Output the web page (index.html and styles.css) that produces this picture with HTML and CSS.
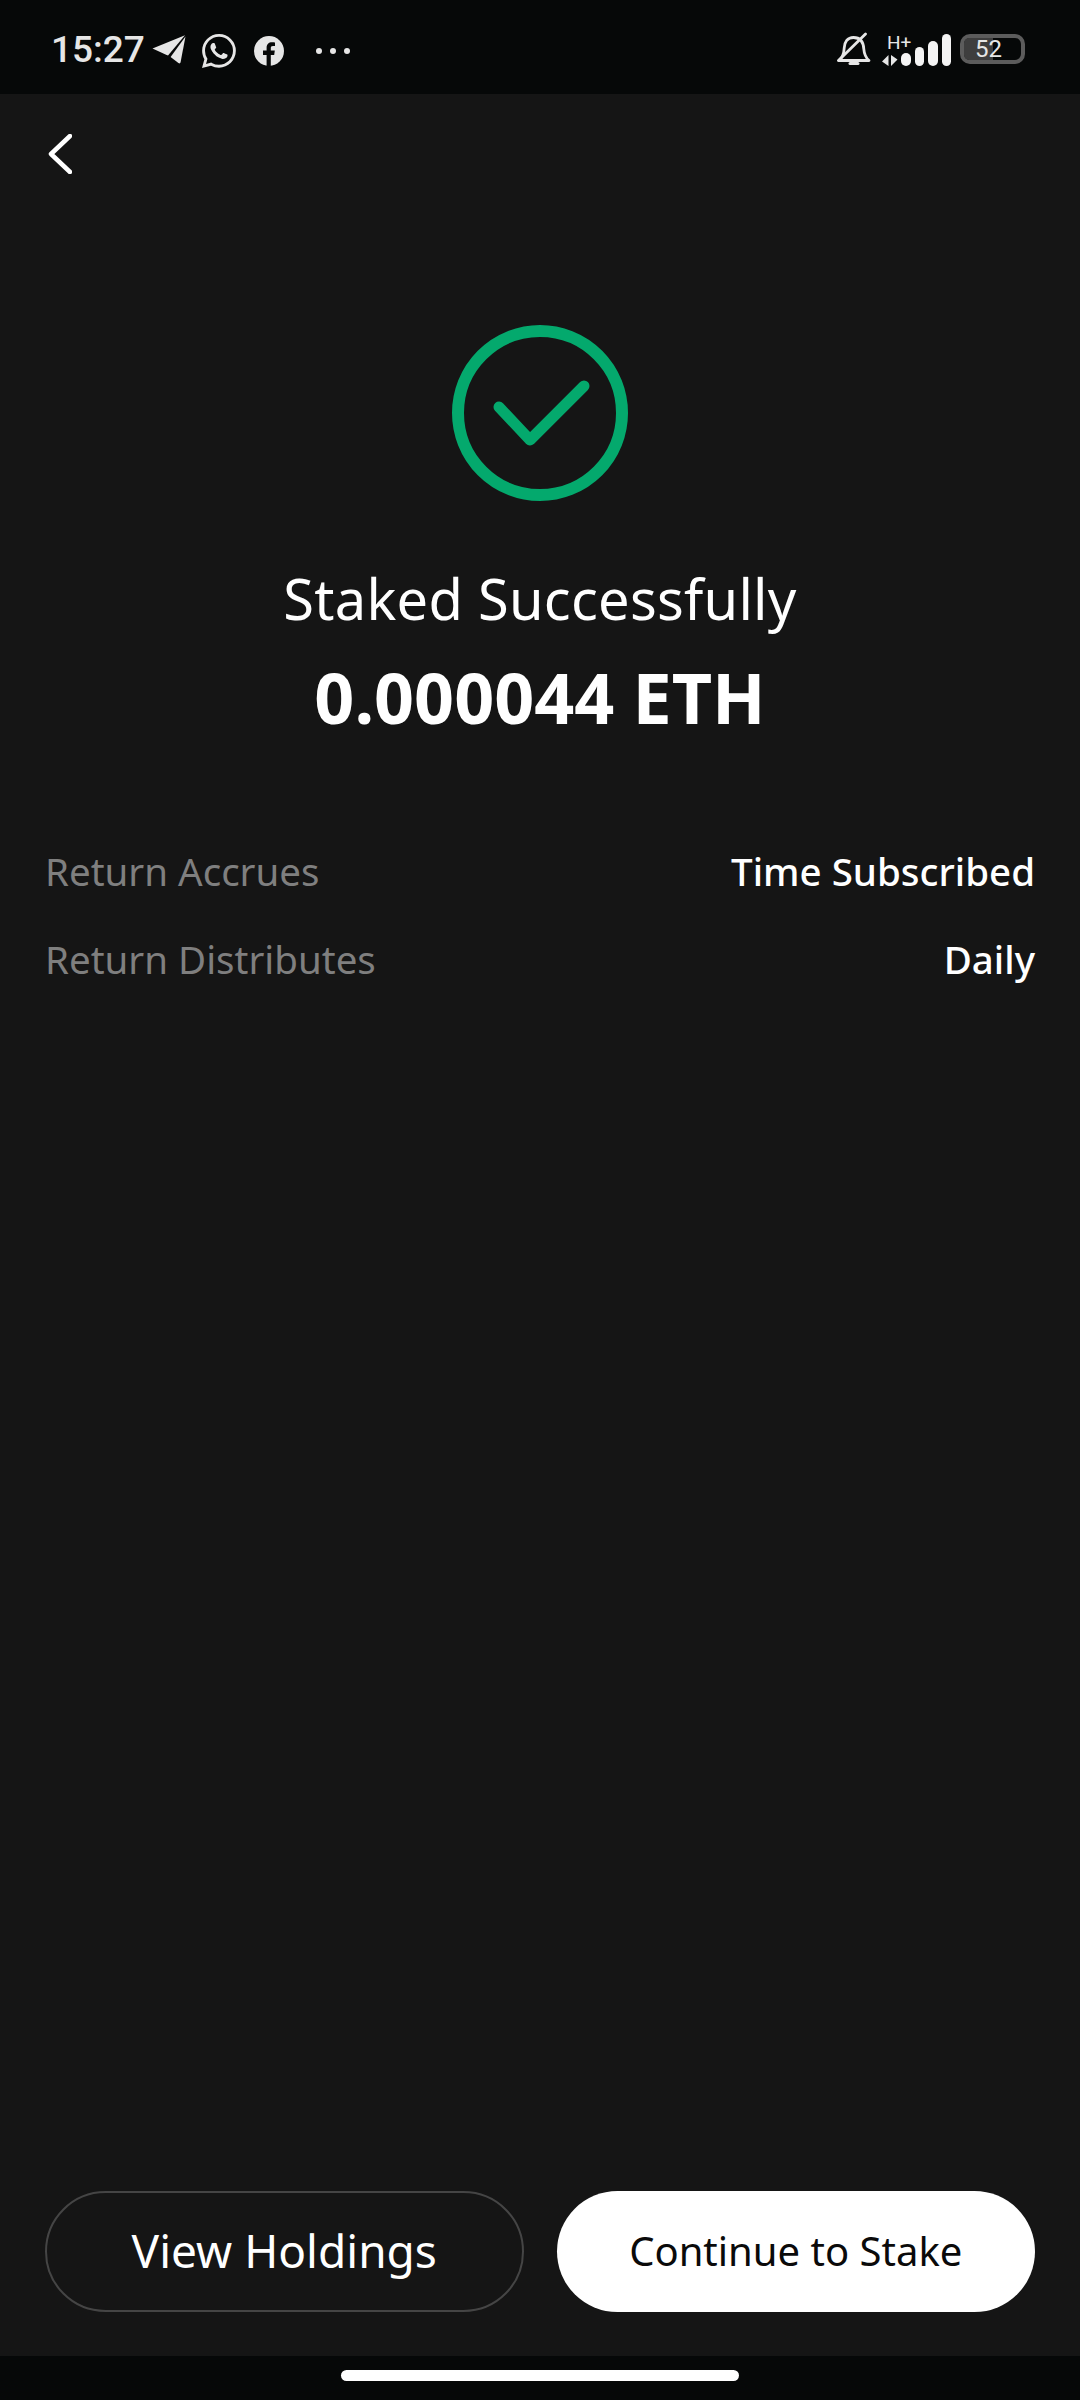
FILE: index.html
```html
<!DOCTYPE html>
<html lang="en">
<head>
    <meta charset="UTF-8">
    <meta name="viewport" content="width=device-width, initial-scale=1.0">
    <title>Staked Successfully</title>
    <link rel="stylesheet" href="styles.css">
</head>
<body>
    <div class="status-bar">
        <div class="status-left">
            <span class="clock">15:27</span>
            <svg class="ic-telegram" width="34" height="30" viewBox="0 0 34 30">
                <path fill="#e6e6e6" d="M0.5 13.6 33 0.2 16 20.5 13 19.2Z"/>
                <path fill="#e6e6e6" d="M33.5 1.5 28.5 27.6Q28 29 26.4 28L18.6 22Z"/>
            </svg>
            <svg class="ic-whatsapp" width="34" height="34" viewBox="0 0 16 16">
                <path fill="#e6e6e6" d="M13.601 2.326A7.85 7.85 0 0 0 7.994 0C3.627 0 .068 3.558.064 7.926c0 1.399.366 2.76 1.057 3.965L0 16l4.204-1.102a7.9 7.9 0 0 0 3.79.965h.004c4.368 0 7.926-3.558 7.93-7.93A7.9 7.9 0 0 0 13.6 2.326zM7.994 14.521a6.6 6.6 0 0 1-3.356-.92l-.24-.144-2.494.654.666-2.433-.156-.251a6.56 6.56 0 0 1-1.007-3.505c0-3.626 2.957-6.584 6.591-6.584a6.56 6.56 0 0 1 4.66 1.931 6.56 6.56 0 0 1 1.928 4.66c-.004 3.639-2.961 6.592-6.592 6.592m3.615-4.934c-.197-.099-1.17-.578-1.353-.646-.182-.065-.315-.099-.445.099-.133.197-.513.646-.627.775-.114.133-.232.148-.43.05-.197-.1-.836-.308-1.592-.985-.59-.525-.985-1.175-1.103-1.372-.114-.198-.011-.304.088-.403.087-.088.197-.232.296-.346.1-.114.133-.198.198-.33.065-.134.034-.248-.015-.347-.05-.099-.445-1.076-.612-1.47-.16-.389-.323-.335-.445-.34-.114-.007-.247-.007-.38-.007a.73.73 0 0 0-.529.247c-.182.198-.691.677-.691 1.654s.71 1.916.81 2.049c.098.133 1.394 2.132 3.383 2.992.47.205.84.326 1.129.418.475.152.904.129 1.246.08.38-.058 1.171-.48 1.338-.943.164-.464.164-.86.114-.943-.049-.084-.182-.133-.38-.232"/>
            </svg>
            <svg class="ic-facebook" width="30" height="30" viewBox="0 0 30 30">
                <circle cx="15" cy="15" r="15" fill="#e6e6e6"/>
                <path fill="#060808" d="M12.6 30V19H9v-4.4h3.6v-2.8c0-3.7 2.1-5.6 5.4-5.6 1.4 0 2.6.1 3 .2v3.7h-2c-1.7 0-2.2.9-2.2 2.2v2.3h4l-.6 4.4h-3.4v11z"/>
            </svg>
            <div class="more-dots"><i></i><i></i><i></i></div>
        </div>
        <div class="status-right">
            <svg class="ic-bell" width="34" height="34" viewBox="0 0 34 34" fill="none" stroke="#e6e6e6" stroke-width="2.8" stroke-linecap="round" stroke-linejoin="round">
                <path d="M2 28.5H32C28.5 25.5 27.2 22 26.8 17C26.4 10 23 5.5 16.5 5.5C10.5 5.5 7.5 10 7.2 16C7 21.5 5.5 25.5 2 28.5Z"/>
                <path d="M1.5 28.5 28.5 2"/>
                <path d="M13 31.5H21" stroke-width="3"/>
            </svg>
            <div class="network">
                <div class="net-type">
                    <span class="net-label">H+</span>
                    <svg width="16" height="11" viewBox="0 0 16 11">
                        <path fill="#e6e6e6" d="M6.5 0V11L0 6.5ZM9 0 15.5 4.5 9 11Z"/>
                    </svg>
                </div>
                <div class="signal">
                    <i class="bar-1"></i><i class="bar-2"></i><i class="bar-3"></i><i class="bar-4"></i>
                </div>
            </div>
            <div class="battery">
                <div class="battery-fill"></div>
                <span class="battery-level">52</span>
            </div>
        </div>
    </div>

    <div class="page">
        <div class="top-nav">
            <svg width="24" height="40" viewBox="0 0 24 40" fill="none" stroke="#fff" stroke-width="4.5" stroke-linecap="round" stroke-linejoin="round">
                <path d="M22 2 3 20 22 38"/>
            </svg>
        </div>

        <div class="result">
            <svg class="result-icon" width="176" height="176" viewBox="0 0 176 176" fill="none" stroke="#04a96d" stroke-linecap="round" stroke-linejoin="round">
                <circle cx="88" cy="88" r="82" stroke-width="12"/>
                <path d="M47 82 78 115 132 61" stroke-width="11"/>
            </svg>
            <h1 class="result-title">Staked Successfully</h1>
            <div class="result-amount">0.000044 ETH</div>
        </div>

        <div class="details">
            <div class="detail-row">
                <span class="detail-label">Return Accrues</span>
                <span class="detail-value">Time Subscribed</span>
            </div>
            <div class="detail-row">
                <span class="detail-label">Return Distributes</span>
                <span class="detail-value">Daily</span>
            </div>
        </div>

        <div class="actions">
            <button class="btn btn-outline">View Holdings</button>
            <button class="btn btn-solid">Continue to Stake</button>
        </div>
    </div>

    <div class="nav-bar"><div class="home-pill"></div></div>
</body>
</html>
```
FILE: styles.css
```css
html, body {
    margin: 0;
    padding: 0;
    background-color: #060808;
}
body {
    width: 1080px;
    height: 2400px;
    display: flex;
    flex-direction: column;
    font-family: "Noto Sans", sans-serif;
    color: #fff;
    overflow: hidden;
}

/* status bar */
.status-bar {
    height: 94px;
    flex: none;
    display: flex;
    justify-content: space-between;
    align-items: center;
    background-color: #060808;
    color: #e6e6e6;
    box-sizing: border-box;
    padding: 0 55px 0 51px;
}
.status-left, .status-right {
    display: flex;
    align-items: center;
}
.clock {
    font-family: Roboto, sans-serif;
    font-size: 37px;
    font-weight: 500;
    line-height: 44px;
    width: 101px;
    margin-top: 6px;
}
.ic-telegram { margin-top: 6px; }
.ic-whatsapp { margin-left: 16px; margin-top: 8px; }
.ic-facebook { margin-left: 18px; margin-top: 8px; }
.more-dots {
    display: flex;
    gap: 8px;
    margin-left: 32px;
    margin-top: 8px;
}
.more-dots i {
    width: 6px;
    height: 6px;
    border-radius: 50%;
    background-color: #e6e6e6;
}
.ic-bell { margin-top: 4px; }
.network {
    display: flex;
    align-items: flex-end;
    margin-left: 11px;
    height: 32px;
    margin-top: 5px;
}
.net-type {
    display: flex;
    flex-direction: column;
    align-items: flex-end;
    width: 28px;
    gap: 5px;
}
.net-label {
    font-family: Roboto, sans-serif;
    font-size: 19px;
    line-height: 15px;
    align-self: flex-start;
    margin-left: 5px;
}
.net-type svg { align-self: flex-start; }
.signal {
    display: flex;
    align-items: flex-end;
    gap: 4px;
    margin-left: -9px;
}
.signal i {
    width: 9.5px;
    border-radius: 5px;
    background-color: #f4f4f4;
}
.bar-1 { height: 13px; }
.bar-2 { height: 19px; }
.bar-3 { height: 25px; }
.bar-4 { height: 32px; }
.battery {
    position: relative;
    width: 65px;
    height: 30px;
    box-sizing: border-box;
    border: 4px solid #5c5c5c;
    border-radius: 10px;
    margin-left: 9px;
    margin-top: 4px;
    padding-right: 8px;
    display: flex;
    justify-content: center;
    align-items: center;
}
.battery-fill {
    position: absolute;
    left: 0;
    top: 0;
    bottom: 0;
    width: 50%;
    background-color: #3e3e3e;
    border-radius: 5px 0 0 5px;
}
.battery-level {
    position: relative;
    font-family: Roboto, sans-serif;
    font-size: 24px;
    line-height: 22px;
}

/* main screen */
.page {
    flex: 1;
    display: flex;
    flex-direction: column;
    background-color: #151515;
}
.top-nav {
    padding: 40px 0 0 48px;
    height: 40px;
}
.result {
    margin-top: 151px;
    display: flex;
    flex-direction: column;
    align-items: center;
}
.result-icon { display: block; }
.result-title {
    margin: 59px 0 0;
    font-size: 56px;
    letter-spacing: 0.25px;
    line-height: 76px;
    font-weight: 400;
}
.result-amount {
    margin-top: 16px;
    font-size: 70px;
    line-height: 90px;
    font-weight: 700;
}
.details {
    flex: 1;
    padding: 103px 45px 0;
}
.detail-row {
    display: flex;
    justify-content: space-between;
    height: 88px;
    font-size: 38.5px;
    line-height: 52px;
}
.detail-label { color: #7f7f7f; }
.detail-value { font-weight: 500; }
.actions {
    display: grid;
    grid-template-columns: 1fr 1fr;
    gap: 33px;
    padding: 0 45px 44px;
}
.btn {
    height: 121px;
    border-radius: 61px;
    font-family: "Noto Sans", sans-serif;
    font-weight: 400;
    padding: 0 0 3px;
}
.btn-outline {
    background-color: transparent;
    border: 2px solid #454545;
    color: #fff;
    font-size: 46px;
}
.btn-solid {
    background-color: #fff;
    border: none;
    color: #0a0a0a;
    font-size: 40px;
}

/* gesture bar */
.nav-bar {
    height: 44px;
    flex: none;
    background-color: #060808;
    display: flex;
    justify-content: center;
}
.home-pill {
    width: 398px;
    height: 11px;
    margin-top: 14px;
    border-radius: 6px;
    background-color: #fff;
}
```
